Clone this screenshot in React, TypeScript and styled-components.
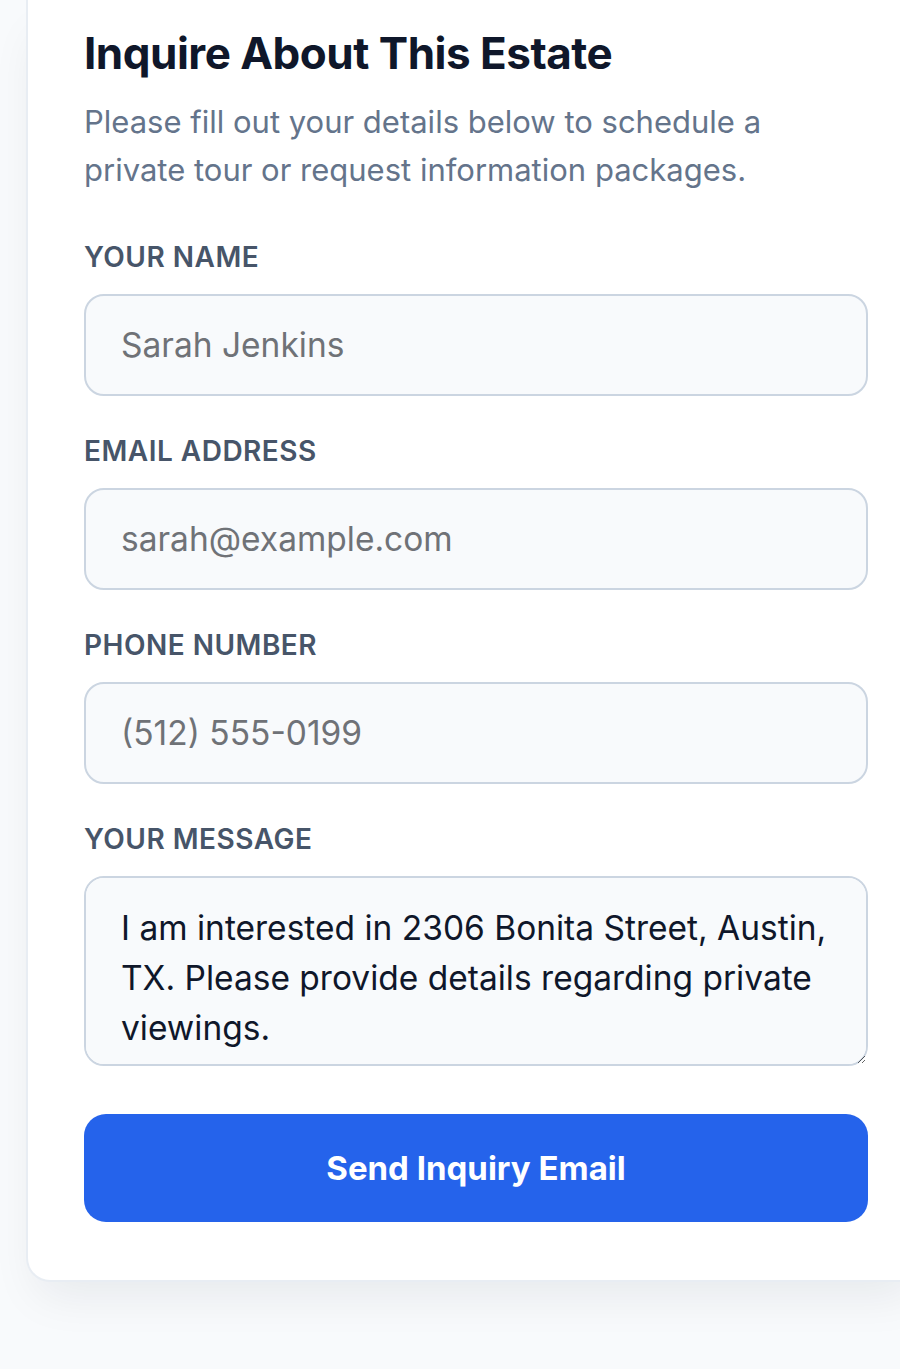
import React from 'react';
import styled, { createGlobalStyle } from 'styled-components';

const GlobalStyle = createGlobalStyle`
  html, body {
    margin: 0;
    padding: 0;
    background: #f8fafc;
    overflow-x: hidden;
  }

  body {
    font-family: Inter, "Noto Sans", sans-serif;
    -webkit-font-smoothing: antialiased;
  }

  * {
    box-sizing: border-box;
  }
`;

const StyledPage = styled.div`
  width: 100%;
  min-height: 1369px;
  padding: 0 0 0 26px;
  display: flex;
`;

const StyledCard = styled.section`
  width: 900px;
  flex-shrink: 0;
  align-self: flex-start;
  background: #fff;
  border: 2px solid #e8edf3;
  border-top: none;
  border-right: none;
  border-radius: 0 0 0 24px;
  box-shadow: 0 24px 48px -12px rgba(15, 23, 42, 0.08);
  padding: 25px 58px 58px 56px;
`;

const StyledTitle = styled.h2`
  margin: 0;
  font-size: 44px;
  line-height: 56px;
  font-weight: 700;
  color: #0f172a;
  letter-spacing: -0.5px;
`;

const StyledLead = styled.p`
  margin: 17px 0 0;
  width: 784px;
  font-size: 31px;
  line-height: 48px;
  color: #64748b;
`;

const StyledForm = styled.form`
  width: 784px;
  margin-top: 45px;
  display: flex;
  flex-direction: column;
`;

const StyledField = styled.label`
  display: flex;
  flex-direction: column;
  gap: 19px;
  margin-bottom: 37px;

  span {
    font-size: 28px;
    line-height: 36px;
    font-weight: 600;
    color: #475569;
    text-transform: uppercase;
    letter-spacing: 0.5px;
  }
`;

const fieldBase = `
  width: 100%;
  border: 2px solid #cbd5e1;
  border-radius: 20px;
  background: #f8fafc;
  font-family: Inter, "Noto Sans", sans-serif;
  font-size: 33.5px;
  color: #0f172a;
  outline: none;

  &::placeholder {
    color: #6f7277;
  }
`;

const StyledInput = styled.input`
  ${fieldBase}
  height: 102px;
  padding: 0 35px;
`;

const StyledTextArea = styled.textarea`
  ${fieldBase}
  display: block;
  height: 190px;
  padding: 25px 35px;
  line-height: 50px;
`;

const StyledButton = styled.button`
  margin-top: 11px;
  height: 108px;
  width: 100%;
  border: none;
  border-radius: 22px;
  background: #2563eb;
  color: #fff;
  font-family: Inter, "Noto Sans", sans-serif;
  font-size: 33px;
  font-weight: 700;
  cursor: pointer;
`;

export default function App() {
  return (
    <>
      <GlobalStyle />
      <StyledPage>
        <StyledCard>
          <StyledTitle>Inquire About This Estate</StyledTitle>
          <StyledLead>
            Please fill out your details below to schedule a private tour or request information packages.
          </StyledLead>
          <StyledForm onSubmit={(e) => e.preventDefault()}>
            <StyledField>
              <span>Your Name</span>
              <StyledInput type="text" placeholder="Sarah Jenkins" />
            </StyledField>
            <StyledField>
              <span>Email Address</span>
              <StyledInput type="email" placeholder="sarah@example.com" />
            </StyledField>
            <StyledField>
              <span>Phone Number</span>
              <StyledInput type="tel" placeholder="(512) 555-0199" />
            </StyledField>
            <StyledField>
              <span>Your Message</span>
              <StyledTextArea
                defaultValue="I am interested in 2306 Bonita Street, Austin, TX. Please provide details regarding private viewings."
              />
            </StyledField>
            <StyledButton type="submit">Send Inquiry Email</StyledButton>
          </StyledForm>
        </StyledCard>
      </StyledPage>
    </>
  );
}
